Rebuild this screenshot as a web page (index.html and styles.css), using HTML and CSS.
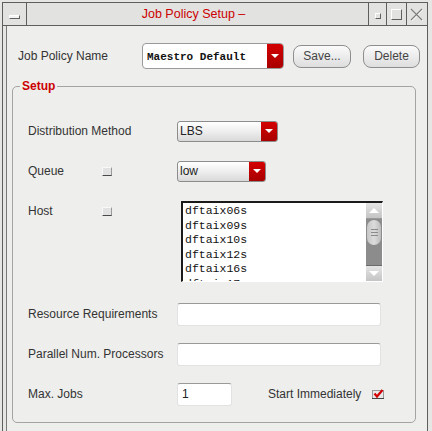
FILE: index.html
```html
<!DOCTYPE html>
<html>
<head>
<meta charset="utf-8">
<title>Job Policy Setup</title>
<link rel="stylesheet" href="styles.css">
</head>
<body>
<div class="window">
  <div class="titlebar">
    <div class="tb-cell tb-menu"><span class="menu-bar"></span></div>
    <div class="tb-title">Job Policy Setup –</div>
    <div class="tb-cell tb-min"><span class="min-box"></span></div>
    <div class="tb-cell tb-max"><span class="max-box"></span></div>
    <div class="tb-cell tb-close">
      <svg width="13" height="13" viewBox="0 0 13 13">
        <path d="M1 1 L12 12 M12 1 L1 12" stroke="#ffffff" stroke-width="1.2" fill="none" transform="translate(0.6,0.6)"/>
        <path d="M1 1 L12 12 M12 1 L1 12" stroke="#7a7a7a" stroke-width="1.1" fill="none"/>
      </svg>
    </div>
  </div>
  <div class="client">
    <div class="top-row">
      <span class="label name-label">Job Policy Name</span>
      <div class="combo">
        <span class="combo-text">Maestro Default</span>
        <span class="arrow"><span class="tri"></span></span>
      </div>
      <button class="btn btn-save">Save...</button>
      <button class="btn btn-delete">Delete</button>
    </div>
    <fieldset class="group">
      <legend>Setup</legend>
      <div class="row">
        <div class="lab"><span class="label">Distribution Method</span></div>
        <div class="select select-lbs"><span class="sel-text">LBS</span><span class="arrow"><span class="tri"></span></span></div>
      </div>
      <div class="row">
        <div class="lab"><span class="label short">Queue</span><span class="cb"></span></div>
        <div class="select select-low"><span class="sel-text">low</span><span class="arrow"><span class="tri"></span></span></div>
      </div>
      <div class="row row-host">
        <div class="lab lab-top"><span class="label short">Host</span><span class="cb"></span></div>
        <div class="listbox">
          <div class="items">
            <div class="item">dftaix06s</div>
            <div class="item">dftaix09s</div>
            <div class="item">dftaix10s</div>
            <div class="item">dftaix12s</div>
            <div class="item">dftaix16s</div>
            <div class="item">dftaix17s</div>
          </div>
          <div class="scrollbar">
            <div class="sb-btn"><span class="sb-up"></span></div>
            <div class="sb-track"><div class="sb-thumb"><span></span><span></span><span></span></div></div>
            <div class="sb-btn"><span class="sb-down"></span></div>
          </div>
        </div>
      </div>
      <div class="row">
        <div class="lab"><span class="label">Resource Requirements</span></div>
        <div class="text-input wide"></div>
      </div>
      <div class="row">
        <div class="lab"><span class="label">Parallel Num. Processors</span></div>
        <div class="text-input wide"></div>
      </div>
      <div class="row">
        <div class="lab"><span class="label">Max. Jobs</span></div>
        <div class="text-input narrow">1</div>
        <span class="label start-label">Start Immediately</span>
        <span class="check">
          <svg width="12" height="10" viewBox="0 0 12 10">
            <rect x="0.5" y="1.5" width="11" height="8" fill="#e8e8e8" stroke="#9a9a9a" stroke-width="1"/>
            <path d="M0 9.5 H12" stroke="#444" stroke-width="1"/>
            <path d="M2.5 4.5 L5 7.5 L10.5 1" stroke="#d40000" stroke-width="2.2" fill="none"/>
          </svg>
        </span>
      </div>
    </fieldset>
  </div>
</div>
</body>
</html>
```
FILE: styles.css
```css
html, body {
  margin: 0;
  padding: 0;
}
body {
  width: 432px;
  height: 431px;
  overflow: hidden;
  background: #e6e6e4;
  font-family: "Liberation Sans", Arial, sans-serif;
  font-size: 12px;
  color: #333333;
}
.window {
  margin: 2px 4px 0 2px;
  border: 1px solid #5e5e5e;
  border-bottom: none;
  height: 440px;
  background: #e6e6e4;
  display: flex;
  flex-direction: column;
}
.titlebar {
  display: flex;
  height: 22px;
  border-bottom: 1px solid #5e5e5e;
  background: #e2e2e0;
  flex: none;
}
.tb-cell {
  display: flex;
  align-items: center;
  justify-content: center;
  border-right: 1px solid #5e5e5e;
}
.tb-menu { width: 23px; }
.menu-bar {
  display: block;
  width: 9px;
  height: 2px;
  margin-top: 5px;
  background: #f4f4f4;
  border-top: 1px solid #ffffff;
  border-left: 1px solid #ffffff;
  border-right: 1px solid #606060;
  border-bottom: 1px solid #606060;
}
.tb-title {
  width: 342px;
  border-right: 1px solid #5e5e5e;
  text-align: center;
  line-height: 22px;
  color: #cc0000;
  font-size: 12.5px;
  padding-right: 8px;
  box-sizing: border-box;
}
.tb-min { width: 17px; }
.min-box {
  display: block;
  width: 4px;
  height: 4px;
  margin-top: 3px;
  border-right: 1px solid #606060;
  border-bottom: 1px solid #606060;
  border-top: 1px solid #ffffff;
  border-left: 1px solid #ffffff;
}
.tb-max { width: 19px; }
.max-box {
  display: block;
  width: 9px;
  height: 9px;
  border-right: 1px solid #606060;
  border-bottom: 1px solid #606060;
  border-top: 1px solid #ffffff;
  border-left: 1px solid #ffffff;
}
.tb-close { width: 19px; border-right: none; }

.client {
  margin: 0 0 0 3px;
  border-left: 1px solid #7a7a7a;
  background: #eeeeec;
  flex: 1;
  padding-left: 11px;
}
.top-row {
  display: flex;
  align-items: center;
  height: 26px;
  margin-top: 17px;
}
.label {
  white-space: nowrap;
  color: #333333;
}
.name-label { width: 124px; }
.combo {
  display: flex;
  width: 142px;
  height: 26px;
  box-sizing: border-box;
  border: 1px solid #9a9a9a;
  border-radius: 4px;
  background: #ffffff;
  overflow: hidden;
}
.combo-text {
  flex: 1;
  font-family: "Liberation Mono", "DejaVu Sans Mono", monospace;
  font-weight: bold;
  font-size: 11px;
  color: #111111;
  line-height: 26px;
  padding-left: 4px;
}
.arrow {
  width: 16px;
  display: flex;
  align-items: center;
  justify-content: center;
  background: linear-gradient(#d40000, #a80000);
  flex: none;
}
.tri {
  width: 0;
  height: 0;
  border-left: 4px solid transparent;
  border-right: 4px solid transparent;
  border-top: 4px solid #ffffff;
}
.btn {
  height: 23px;
  box-sizing: border-box;
  border: 1px solid #8e8e8e;
  border-radius: 8px;
  background: linear-gradient(#fbfbfb, #e9e9e9 60%, #dedede);
  font-family: "Liberation Sans", Arial, sans-serif;
  font-size: 12px;
  color: #444444;
  padding: 0;
}
.btn-save { width: 58px; margin-left: 9px; }
.btn-delete { width: 57px; margin-left: 12px; }

.group {
  margin: 10px 0 0 -6px;
  width: 404px;
  box-sizing: border-box;
  border: 1px solid #a4a4a4;
  border-radius: 5px;
  padding: 18px 0 8px 15px;
}
.group legend {
  margin-left: -8px;
  padding: 0 2px;
  color: #cc0000;
  font-weight: bold;
  font-size: 12px;
  line-height: 14px;
}
.row {
  display: flex;
  align-items: center;
  height: 40px;
}
.row-host {
  height: 103px;
  align-items: flex-start;
  padding-top: 10px;
  box-sizing: border-box;
}
.lab {
  width: 149px;
  display: flex;
  align-items: center;
  flex: none;
}
.lab-top { height: 20px; }
.short { width: 74px; }
.cb {
  width: 8px;
  height: 7px;
  background: #e2e2e2;
  border-top: 1px solid #f8f8f8;
  border-left: 1px solid #f8f8f8;
  border-right: 1px solid #9a9a9a;
  border-bottom: 1px solid #4a4a4a;
}
.select {
  display: flex;
  height: 21px;
  box-sizing: border-box;
  border: 1px solid #8c8c8c;
  border-radius: 3px;
  overflow: hidden;
  background: linear-gradient(#ffffff, #ececec 55%, #d9d9d9);
}
.sel-text {
  flex: 1;
  line-height: 18px;
  padding-left: 2px;
  color: #222222;
  font-size: 12px;
}
.select-lbs { width: 101px; }
.select-low { width: 89px; }

.listbox {
  margin-left: 4px;
  width: 202px;
  height: 81px;
  box-sizing: border-box;
  border-top: 2px solid #1a1a1a;
  border-left: 2px solid #1a1a1a;
  border-right: 1px solid #ffffff;
  border-bottom: 1px solid #ffffff;
  background: #ffffff;
  display: flex;
  overflow: hidden;
}
.items {
  flex: 1;
  padding: 1px 0 0 2px;
  overflow: hidden;
  font-family: "Liberation Mono", "DejaVu Sans Mono", monospace;
  font-size: 11.5px;
  line-height: 14.5px;
  color: #111111;
}
.scrollbar {
  width: 16px;
  display: flex;
  flex-direction: column;
  background: #8c8c8c;
}
.sb-btn {
  height: 16px;
  flex: none;
  display: flex;
  align-items: center;
  justify-content: center;
  background: linear-gradient(#e4e4e4, #c4c4c4);
  border-bottom: 1px solid #9a9a9a;
  box-sizing: border-box;
}
.sb-btn:last-child { border-bottom: none; border-top: 1px solid #6a6a6a; }
.sb-up {
  width: 0; height: 0;
  border-left: 5px solid transparent;
  border-right: 5px solid transparent;
  border-bottom: 5px solid #ffffff;
}
.sb-down {
  width: 0; height: 0;
  border-left: 5px solid transparent;
  border-right: 5px solid transparent;
  border-top: 5px solid #ffffff;
}
.sb-track {
  flex: 1;
  padding-top: 1px;
}
.sb-thumb {
  height: 25px;
  margin: 0 1px;
  border-radius: 7px;
  background: linear-gradient(90deg, #c6c6c6, #dcdcdc 50%, #bcbcbc);
  display: flex;
  flex-direction: column;
  align-items: center;
  justify-content: center;
  gap: 2px;
}
.sb-thumb span {
  display: block;
  width: 7px;
  height: 1px;
  background: #8a8a8a;
}
.text-input {
  height: 23px;
  box-sizing: border-box;
  background: #ffffff;
  border: 1px solid #e2e2e2;
  border-top: 1px solid #9a9a9a;
  border-radius: 3px;
  line-height: 21px;
  padding-left: 4px;
  color: #222222;
  font-size: 12px;
}
.wide { width: 204px; }
.narrow { width: 55px; }
.start-label { margin-left: 36px; }
.check {
  display: flex;
  margin-left: 11px;
}
```
